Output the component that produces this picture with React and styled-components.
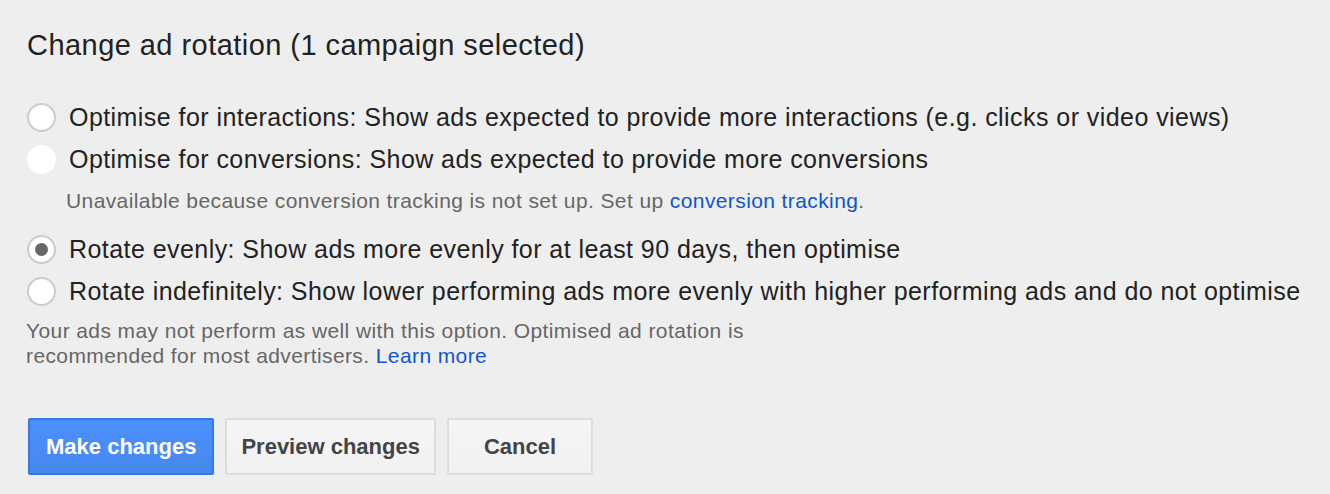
import React, { useState } from "react";
import styled, { createGlobalStyle } from "styled-components";

const GlobalStyle = createGlobalStyle`
  html, body {
    margin: 0;
    background: #eeeeee;
  }
  body {
    font-family: "Liberation Sans", Arial, sans-serif;
    color: #222222;
  }
`;

const Page = styled.div`
  padding: 27px 26px 0 26px;
`;

const Title = styled.h1`
  margin: 0 0 33px 1px;
  font-size: 29px;
  letter-spacing: 0.45px;
  font-weight: normal;
  line-height: 36px;
  color: #222222;
`;

const OptionList = styled.div`
  display: flex;
  flex-direction: column;
`;

const OptionRow = styled.label`
  display: flex;
  align-items: center;
  gap: 13px;
  height: 42px;
  font-size: 25px;
  letter-spacing: 0.44px;
  color: #222222;
  white-space: nowrap;
  cursor: ${({ $disabled }) => ($disabled ? "default" : "pointer")};
`;

const Radio = styled.span`
  box-sizing: border-box;
  width: 29px;
  height: 29px;
  border-radius: 50%;
  background: #ffffff;
  border: 2px solid ${({ $disabled }) => ($disabled ? "#ffffff" : "#cccccc")};
  display: flex;
  align-items: center;
  justify-content: center;
  flex-shrink: 0;
  margin-left: 1px;
`;

const Dot = styled.span`
  width: 13px;
  height: 13px;
  border-radius: 50%;
  background: #666666;
`;

const SubNote = styled.div`
  box-sizing: border-box;
  height: 48px;
  padding: 8px 0 0 40px;
  font-size: 21px;
  letter-spacing: 0.4px;
  line-height: 25px;
  color: #666666;
`;

const Link = styled.a`
  color: #1155cc;
  text-decoration: none;
`;

const Helper = styled.p`
  margin: 6px 0 0 0;
  width: 740px;
  font-size: 21px;
  letter-spacing: 0.4px;
  line-height: 25px;
  color: #666666;
`;

const ButtonRow = styled.div`
  display: flex;
  gap: 11px;
  margin-top: 50px;
  padding-left: 2px;
`;

const Button = styled.button`
  box-sizing: border-box;
  height: 57px;
  padding: 0 ${({ $pad }) => $pad}px;
  font-family: "Liberation Sans", Arial, sans-serif;
  font-size: 22px;
  font-weight: bold;
  border-radius: 2px;
  cursor: pointer;
  background: ${({ $primary }) =>
    $primary
      ? "linear-gradient(#4d90fe, #4787ed)"
      : "linear-gradient(#f5f5f5, #f1f1f1)"};
  color: ${({ $primary }) => ($primary ? "#ffffff" : "#444444")};
  border: 2px solid ${({ $primary }) => ($primary ? "#3079ed" : "#dcdcdc")};
`;

const options = [
  {
    id: "interactions",
    label:
      "Optimise for interactions: Show ads expected to provide more interactions (e.g. clicks or video views)",
  },
  {
    id: "conversions",
    label:
      "Optimise for conversions: Show ads expected to provide more conversions",
    disabled: true,
  },
  {
    id: "evenly",
    label:
      "Rotate evenly: Show ads more evenly for at least 90 days, then optimise",
  },
  {
    id: "indefinitely",
    label:
      "Rotate indefinitely: Show lower performing ads more evenly with higher performing ads and do not optimise",
  },
];

export default function App() {
  const [selected, setSelected] = useState("evenly");

  return (
    <Page>
      <GlobalStyle />
      <Title>Change ad rotation (1 campaign selected)</Title>
      <OptionList>
        {options.map(({ id, label, disabled }) => (
          <React.Fragment key={id}>
            <OptionRow
              $disabled={disabled}
              onClick={() => !disabled && setSelected(id)}
            >
              <Radio $disabled={disabled}>{selected === id && <Dot />}</Radio>
              {label}
            </OptionRow>
            {disabled && (
              <SubNote>
                Unavailable because conversion tracking is not set up. Set up{" "}
                <Link href="#">conversion tracking</Link>.
              </SubNote>
            )}
          </React.Fragment>
        ))}
      </OptionList>
      <Helper>
        Your ads may not perform as well with this option. Optimised ad
        rotation is recommended for most advertisers.{" "}
        <Link href="#">Learn more</Link>
      </Helper>
      <ButtonRow>
        <Button $primary $pad={16}>Make changes</Button>
        <Button $pad={14}>Preview changes</Button>
        <Button $pad={35}>Cancel</Button>
      </ButtonRow>
    </Page>
  );
}
